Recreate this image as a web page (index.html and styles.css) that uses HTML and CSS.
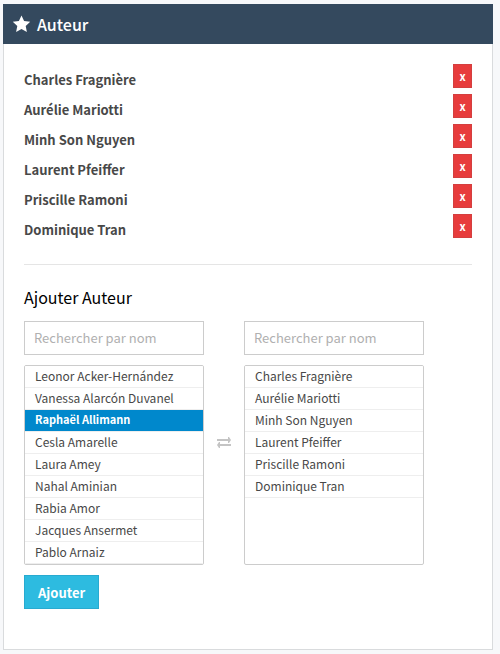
FILE: index.html
```html
<!DOCTYPE html>
<html lang="fr">
<head>
<meta charset="utf-8">
<meta name="viewport" content="width=device-width, initial-scale=1">
<title>Auteur</title>
<link rel="stylesheet" href="styles.css">
</head>
<body>
<section class="panel">
  <header class="panel-header">
    <svg class="star" viewBox="0 0 18 18" aria-hidden="true"><path d="M9 .4l2.6 5.6 6.1.7-4.5 4.2 1.2 6.1L9 14l-5.4 3 1.2-6.1L.3 6.7 6.4 6z"/></svg>
    <h1 class="panel-title">Auteur</h1>
  </header>
  <div class="panel-body">
    <ul class="authors">
      <li class="author"><span>Charles Fragnière</span><button class="remove" type="button">x</button></li>
      <li class="author"><span>Aurélie Mariotti</span><button class="remove" type="button">x</button></li>
      <li class="author"><span>Minh Son Nguyen</span><button class="remove" type="button">x</button></li>
      <li class="author"><span>Laurent Pfeiffer</span><button class="remove" type="button">x</button></li>
      <li class="author"><span>Priscille Ramoni</span><button class="remove" type="button">x</button></li>
      <li class="author"><span>Dominique Tran</span><button class="remove" type="button">x</button></li>
    </ul>
    <hr class="divider">
    <form>
      <h2 class="form-title">Ajouter Auteur</h2>
      <div class="picker">
        <div class="picker-column">
          <input class="search" type="text" placeholder="Rechercher par nom" aria-label="Rechercher par nom">
          <ul class="options">
            <li><button class="option" type="button">Leonor Acker-Hernández</button></li>
            <li><button class="option" type="button">Vanessa Alarcón Duvanel</button></li>
            <li><button class="option option-active" type="button">Raphaël Allimann</button></li>
            <li><button class="option" type="button">Cesla Amarelle</button></li>
            <li><button class="option" type="button">Laura Amey</button></li>
            <li><button class="option" type="button">Nahal Aminian</button></li>
            <li><button class="option" type="button">Rabia Amor</button></li>
            <li><button class="option" type="button">Jacques Ansermet</button></li>
            <li><button class="option" type="button">Pablo Arnaiz</button></li>
          </ul>
        </div>
        <svg class="swap" viewBox="0 0 14 12" aria-hidden="true"><path d="M0 2h11V0h1l2 3-2 3h-1V4H0zM14 9H3v2H2L0 8l2-3h1v2h11z"/></svg>
        <div class="picker-column">
          <input class="search" type="text" placeholder="Rechercher par nom" aria-label="Rechercher par nom">
          <ul class="options">
            <li><button class="option" type="button">Charles Fragnière</button></li>
            <li><button class="option" type="button">Aurélie Mariotti</button></li>
            <li><button class="option" type="button">Minh Son Nguyen</button></li>
            <li><button class="option" type="button">Laurent Pfeiffer</button></li>
            <li><button class="option" type="button">Priscille Ramoni</button></li>
            <li><button class="option" type="button">Dominique Tran</button></li>
          </ul>
        </div>
      </div>
      <button class="submit" type="submit">Ajouter</button>
    </form>
  </div>
</section>
</body>
</html>
```
FILE: styles.css
```css
* {
  box-sizing: border-box;
}

body {
  margin: 0;
  padding: 4px 7px 4px 3px;
  background: #f7f8fa;
  color: #484848;
  font-family: "Source Sans Pro", "Noto Sans CJK JP", sans-serif;
  font-size: 13px;
}

button,
input {
  font: inherit;
}

ul {
  margin: 0;
  padding: 0;
  list-style: none;
}

.panel {
  background: #fff;
}

.panel-header {
  display: flex;
  align-items: center;
  gap: 6px;
  height: 40px;
  padding: 0 9px;
  background: #34495e;
  color: #fff;
}

.star {
  width: 19px;
  height: 18px;
  fill: currentColor;
}

.panel-title,
.form-title {
  margin: 0;
  font-size: 16px;
  font-weight: 500;
  line-height: 24px;
}

.panel-body {
  padding: 20px 20px 40px;
  border: 1px solid #d9dbdd;
  border-top: 0;
}

.authors {
  display: grid;
  gap: 6px;
}

.author {
  display: flex;
  align-items: flex-end;
  justify-content: space-between;
  height: 24px;
  font-weight: 700;
  line-height: 17px;
}

.remove {
  width: 19px;
  height: 24px;
  padding: 0;
  border: 1px solid #d43f3f;
  background: #e73c3c;
  color: #fff;
  font-size: 11px;
  font-weight: 700;
  line-height: 20px;
}

.divider {
  height: 1px;
  margin: 26px 0 20px;
  border: 0;
  background: #e5e5e5;
}

.form-title {
  color: #000;
  font-weight: 400;
}

.picker {
  display: grid;
  grid-template-columns: 180px 14px 180px;
  column-gap: 13px;
  margin: 12px 0 10px;
}

.picker-column {
  display: grid;
  gap: 10px;
}

.search {
  width: 100%;
  height: 34px;
  padding: 0 9px 2px;
  border: 1px solid #ccc;
  background: #fff;
}

.search::placeholder {
  color: #b0b0b0;
  opacity: 1;
}

.options {
  height: 200px;
  overflow: hidden;
  border: 1px solid #ccc;
  border-radius: 2px;
}

.option {
  display: block;
  width: 100%;
  height: 22px;
  padding: 0 10px 2px;
  border: 0;
  border-bottom: 1px solid #eee;
  background: #fff;
  color: #484848;
  font-size: 12px;
  line-height: 19px;
  text-align: left;
}

.option-active {
  background: #08c;
  color: #fff;
  font-size: 11px;
  font-weight: 700;
}

.swap {
  align-self: center;
  width: 14px;
  height: 12px;
  fill: #c4c4c4;
}

.submit {
  height: 34px;
  padding: 0 13px;
  border: 1px solid #28aad0;
  background: #2dbbe0;
  color: #fff;
  font-weight: 700;
}
```
